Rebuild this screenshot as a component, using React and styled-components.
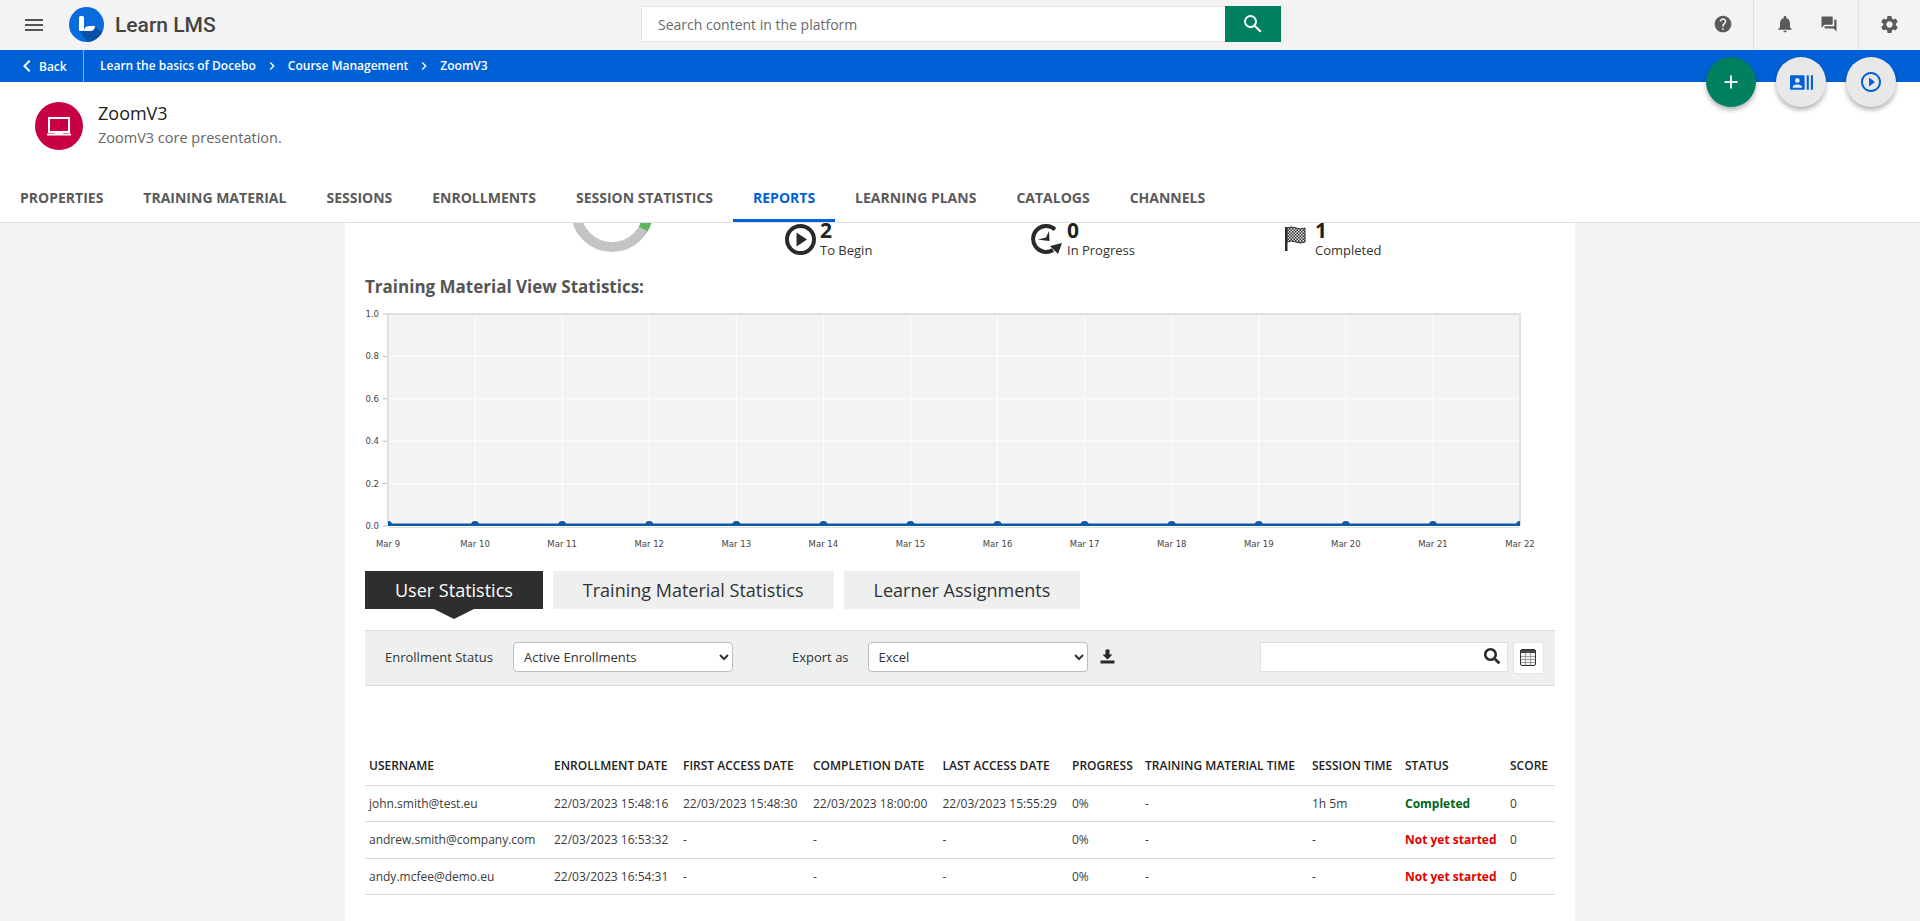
import React from 'react';
import styled, { createGlobalStyle } from 'styled-components';
import {
  MdMenu,
  MdSearch,
  MdHelp,
  MdNotifications,
  MdForum,
  MdSettings,
  MdChevronLeft,
  MdChevronRight,
  MdAdd,
  MdRecentActors,
  MdPlayCircleOutline,
} from 'react-icons/md';
import { FaSearch } from 'react-icons/fa';

const GlobalStyle = createGlobalStyle`
  html, body {
    margin: 0;
    padding: 0;
    background: #f3f3f3;
    font-family: "Open Sans", "Liberation Sans", sans-serif;
    color: #333;
  }
  * { box-sizing: border-box; }
`;

const Page = styled.div`
  position: relative;
  width: 1920px;
  height: 921px;
  overflow: hidden;
  display: flex;
  flex-direction: column;
`;

const TopBar = styled.header`
  height: 50px;
  flex: none;
  display: flex;
  background: #f3f3f3;
`;

const Brand = styled.div`
  width: 641px;
  display: flex;
  align-items: center;
  padding-left: 22px;
  color: #555;
`;

const LogoMark = styled.svg`
  width: 35px;
  height: 35px;
  margin-left: 23px;
  margin-top: -1px;
`;

const BrandName = styled.span`
  margin-left: 11px;
  font-family: Roboto, sans-serif;
  font-weight: 500;
  font-size: 21px;
  color: #444;
`;

const SearchBox = styled.div`
  width: 640px;
  height: 36px;
  margin-top: 6px;
  display: flex;
`;

const SearchInput = styled.input`
  flex: 1;
  min-width: 0;
  border: 1px solid #e4e4e4;
  border-right: none;
  background: #fff;
  padding: 0 16px;
  font-family: inherit;
  font-size: 14px;
  outline: none;

  &::placeholder {
    color: #6a6a6a;
    opacity: 1;
  }
`;

const SearchButton = styled.button`
  width: 56px;
  border: none;
  background: #00805f;
  color: #fff;
  display: flex;
  align-items: center;
  justify-content: center;
  padding: 0;
`;

const HeaderRight = styled.div`
  margin-left: auto;
  display: flex;
  color: #5a5a5a;
`;

const HeaderCell = styled.div`
  width: ${(p) => p.$w}px;
  height: 50px;
  display: flex;
  align-items: center;
  justify-content: center;
  padding-bottom: 2px;
  gap: ${(p) => p.$gap || 0}px;
  border-left: ${(p) => (p.$divided ? '1px solid #e2e2e2' : 'none')};
`;

const Breadcrumbs = styled.nav`
  height: 32px;
  flex: none;
  display: flex;
  align-items: center;
  background: #0060d6;
  color: #fff;
  font-size: 12px;
  font-weight: 600;
`;

const BackLink = styled.a`
  width: 84px;
  height: 32px;
  display: flex;
  align-items: center;
  padding-left: 15px;
  border-right: 1px solid #7fb0ea;
  margin-right: 16px;
`;

const Crumb = styled.span`
  padding-bottom: 2px;
`;

const CrumbSeparator = styled.span`
  display: flex;
  margin: 0 8px;
`;

const CourseHeader = styled.section`
  height: 141px;
  flex: none;
  display: flex;
  flex-direction: column;
  justify-content: space-between;
  background: #fff;
  border-bottom: 1px solid #e0e0e0;
`;

const CourseInfo = styled.div`
  display: flex;
  gap: 15px;
  padding: 20px 0 0 35px;
`;

const CourseBadge = styled.div`
  width: 48px;
  height: 48px;
  border-radius: 50%;
  background: #c60043;
  display: flex;
  align-items: center;
  justify-content: center;
`;

const CourseText = styled.div`
  display: flex;
  flex-direction: column;
  margin-top: -1px;
`;

const CourseTitle = styled.h1`
  margin: 0;
  font-size: 18px;
  line-height: 24px;
  font-weight: 400;
  color: #222;
`;

const CourseSubtitle = styled.p`
  margin: 1px 0 0;
  font-size: 14.5px;
  line-height: 24px;
  color: #666;
`;

const TabRow = styled.div`
  display: flex;
`;

const Tab = styled.a`
  height: 40px;
  padding: 0 20px 7px;
  display: flex;
  align-items: center;
  font-size: 14px;
  font-weight: 700;
  text-transform: uppercase;
  color: ${(p) => (p.$active ? '#0060d6' : '#5a5a5a')};
  border-bottom: 3px solid ${(p) => (p.$active ? '#0060d6' : 'transparent')};
`;

const Fabs = styled.div`
  position: absolute;
  top: 57px;
  right: 24px;
  display: flex;
  gap: 20px;
`;

const Fab = styled.button`
  width: 50px;
  height: 50px;
  border: none;
  padding: 0;
  border-radius: 50%;
  background: ${(p) => (p.$primary ? '#00805f' : '#e8e8e8')};
  color: ${(p) => (p.$primary ? '#fff' : '#0060d6')};
  display: flex;
  align-items: center;
  justify-content: center;
  box-shadow: 0 3px 5px rgba(0, 0, 0, 0.3);
`;

const Main = styled.main`
  flex: 1;
  min-height: 0;
  display: flex;
  justify-content: center;
  overflow: hidden;
`;

const Card = styled.div`
  width: 1230px;
  background: #fff;
  padding: 0 20px;
`;

const StatsRow = styled.div`
  display: grid;
  grid-template-columns: 420px 246px 252px 1fr;
  height: 33px;
`;

const Donut = styled.svg`
  width: 84px;
  height: 30px;
  margin-left: 205px;
`;

const Stat = styled.div`
  display: flex;
  gap: 4px;
`;

const StatIcon = styled.svg`
  flex: none;
  margin-top: ${(p) => p.$top}px;
`;

const StatText = styled.div`
  display: flex;
  flex-direction: column;
`;

const StatValue = styled.span`
  font-size: 21px;
  line-height: 15px;
  font-weight: 700;
  color: #222;
`;

const StatLabel = styled.span`
  font-size: 13px;
  line-height: 18px;
  margin-top: 3px;
  color: #333;
`;

const ChartTitle = styled.h2`
  margin: 19px 0 0;
  font-size: 17px;
  line-height: 24px;
  font-weight: 700;
  color: #555;
`;

const ChartSvg = styled.svg`
  display: block;
  width: 1190px;
  height: 250px;
  margin-top: 6px;
  font-family: "DejaVu Sans", sans-serif;
  font-size: 8.5px;
  fill: #444;
`;

const StatTabs = styled.div`
  display: flex;
  gap: 10px;
  margin-top: 16px;
`;

const StatTab = styled.a`
  position: relative;
  height: 38px;
  padding: 0 30px;
  display: flex;
  align-items: center;
  font-size: 18px;
  background: ${(p) => (p.$active ? '#2e2e2e' : '#eef0f0')};
  color: ${(p) => (p.$active ? '#fff' : '#333')};

  &::after {
    content: ${(p) => (p.$active ? "''" : 'none')};
    position: absolute;
    top: 38px;
    left: 50%;
    margin-left: -20px;
    border-style: solid;
    border-width: 10px 20px 0;
    border-color: #2e2e2e transparent transparent;
  }
`;

const Toolbar = styled.div`
  height: 56px;
  margin-top: 21px;
  display: flex;
  align-items: center;
  padding: 0 0 3px 20px;
  background: #eef0f0;
  border-top: 1px solid #dcdcdc;
  border-bottom: 1px solid #dcdcdc;
  font-size: 13px;
`;

const ToolbarLabel = styled.label`
  color: #333;
  margin-left: ${(p) => p.$gap || 0}px;
`;

const Select = styled.select`
  width: 220px;
  height: 30px;
  margin-left: ${(p) => p.$gap}px;
  padding: 0 6px;
  border: 1px solid #bdbdbd;
  border-radius: 4px;
  background-color: #fff;
  font-family: inherit;
  font-size: 13px;
  color: #333;
`;

const IconButton = styled.button`
  margin-left: 12px;
  padding: 0;
  border: none;
  background: none;
  display: flex;
  color: #2a2a2a;
`;

const FilterWrap = styled.div`
  position: relative;
  width: 248px;
  height: 30px;
  margin-left: 145px;
`;

const FilterInput = styled.input`
  width: 100%;
  height: 100%;
  border: 1px solid #e0e0e0;
  background: #fff;
  outline: none;
`;

const FilterIcon = styled.span`
  position: absolute;
  top: 6px;
  right: 8px;
  display: flex;
  color: #2a2a2a;
`;

const ColumnsButton = styled.button`
  width: 31px;
  height: 32px;
  margin-left: 5px;
  margin-top: 2px;
  padding: 0;
  border: 1px solid #e4e4e4;
  border-radius: 3px;
  background: #fff;
  display: flex;
  align-items: center;
  justify-content: center;
`;

const Table = styled.table`
  width: 1190px;
  margin-top: 60px;
  border-collapse: collapse;
  table-layout: fixed;
  font-size: 12px;
`;

const Th = styled.th`
  width: ${(p) => p.$w}px;
  height: 39px;
  padding: 0 0 0 4px;
  text-align: left;
  font-weight: 600;
  text-transform: uppercase;
  color: #222;
  white-space: nowrap;
  border-bottom: 1px solid #d9d9d9;
`;

const Td = styled.td`
  height: 36.5px;
  padding: 0 0 0 4px;
  color: #3a3a3a;
  white-space: nowrap;
  border-bottom: 1px solid #d9d9d9;
`;

const Status = styled.span`
  font-weight: 700;
  color: ${(p) => (p.$done ? '#006414' : '#e00000')};
`;

const columns = [
  ['Username', 185],
  ['Enrollment date', 129],
  ['First access date', 130],
  ['Completion date', 129.5],
  ['Last access date', 129.5],
  ['Progress', 73],
  ['Training material time', 167],
  ['Session time', 93],
  ['Status', 105],
  ['Score', 49],
];

const rows = [
  ['john.smith@test.eu', '22/03/2023 15:48:16', '22/03/2023 15:48:30', '22/03/2023 18:00:00', '22/03/2023 15:55:29', '0%', '-', '1h 5m', 'Completed', '0'],
  ['andrew.smith@company.com', '22/03/2023 16:53:32', '-', '-', '-', '0%', '-', '-', 'Not yet started', '0'],
  ['andy.mcfee@demo.eu', '22/03/2023 16:54:31', '-', '-', '-', '0%', '-', '-', 'Not yet started', '0'],
];

const tabs = ['Properties', 'Training Material', 'Sessions', 'Enrollments', 'Session Statistics', 'Reports', 'Learning Plans', 'Catalogs', 'Channels'];

const PLOT = { left: 23, top: 9, right: 1155, bottom: 221 };
const days = Array.from({ length: 14 }, (_, i) => i + 9);

function Logo() {
  return (
    <LogoMark viewBox="0 0 35 35">
      <defs>
        <clipPath id="logo-clip">
          <circle cx="17.5" cy="17.5" r="17.5" />
        </clipPath>
      </defs>
      <circle cx="17.5" cy="17.5" r="17.5" fill="#0a6bdc" />
      <g clipPath="url(#logo-clip)">
        <path d="M15 22 L26 19 L40 33 L22 40 L11 24 Z" fill="#0850a8" />
      </g>
      <path d="M10 10.5 q0 -1.5 1.5 -1.5 h2 q1.5 0 1.5 1.5 V22.5 q0 1.5 -1.5 1.5 h-2 q-1.5 0 -1.5 -1.5 Z" fill="#fff" />
      <path d="M15 24 q0 -4.5 5 -5 h6 q0 5 -5 5 Z" fill="#fff" />
    </LogoMark>
  );
}

function ChartPanel() {
  const stepX = (PLOT.right - PLOT.left) / 13;
  const stepY = (PLOT.bottom - PLOT.top) / 5;
  const w = PLOT.right - PLOT.left;
  const h = PLOT.bottom - PLOT.top;
  return (
    <ChartSvg viewBox="0 0 1190 250">
      <defs>
        <clipPath id="plot-clip">
          <rect x={PLOT.left} y={PLOT.top} width={w} height={h} />
        </clipPath>
      </defs>
      <rect x={PLOT.left} y={PLOT.top} width={w} height={h} fill="#f3f3f3" />
      {days.map((d, i) => (
        <line key={d} x1={PLOT.left + i * stepX} x2={PLOT.left + i * stepX} y1={PLOT.top} y2={PLOT.bottom} stroke="#fff" />
      ))}
      {[1, 0.8, 0.6, 0.4, 0.2, 0].map((v, i) => (
        <g key={v}>
          <line x1={PLOT.left} x2={PLOT.right} y1={PLOT.top + i * stepY} y2={PLOT.top + i * stepY} stroke="#fff" />
          <line x1={PLOT.left - 5} x2={PLOT.left} y1={PLOT.top + i * stepY} y2={PLOT.top + i * stepY} stroke="#bbb" />
          <text x={PLOT.left - 9} y={PLOT.top + i * stepY + 3} textAnchor="end">{v.toFixed(1)}</text>
        </g>
      ))}
      <path d={`M${PLOT.left} ${PLOT.bottom} V${PLOT.top} H${PLOT.right} V${PLOT.bottom}`} fill="none" stroke="#e0e0e0" strokeWidth="2" />
      <line x1={PLOT.left} x2={PLOT.right} y1={PLOT.bottom + 1.5} y2={PLOT.bottom + 1.5} stroke="#e0e0e0" />
      <g clipPath="url(#plot-clip)">
        <line x1={PLOT.left} x2={PLOT.right} y1={PLOT.bottom - 1} y2={PLOT.bottom - 1} stroke="#0a5aa8" strokeWidth="3" />
        {days.map((d, i) => (
          <circle key={d} cx={PLOT.left + i * stepX} cy={PLOT.bottom - 1} r="4" fill="#0a5aa8" />
        ))}
      </g>
      {days.map((d, i) => (
        <text key={d} x={PLOT.left + i * stepX} y={PLOT.bottom + 21} textAnchor="middle">{`Mar ${d}`}</text>
      ))}
    </ChartSvg>
  );
}

function App() {
  return (
    <Page>
      <GlobalStyle />
      <TopBar>
        <Brand>
          <MdMenu size={24} />
          <Logo />
          <BrandName>Learn LMS</BrandName>
        </Brand>
        <SearchBox>
          <SearchInput placeholder="Search content in the platform" />
          <SearchButton><MdSearch size={24} /></SearchButton>
        </SearchBox>
        <HeaderRight>
          <HeaderCell $w={60}><MdHelp size={20} /></HeaderCell>
          <HeaderCell $w={105} $gap={25} $divided><MdNotifications size={20} /><MdForum size={18} /></HeaderCell>
          <HeaderCell $w={62} $divided><MdSettings size={21} /></HeaderCell>
        </HeaderRight>
      </TopBar>

      <Breadcrumbs>
        <BackLink><MdChevronLeft size={24} />Back</BackLink>
        <Crumb>Learn the basics of Docebo</Crumb>
        <CrumbSeparator><MdChevronRight size={16} /></CrumbSeparator>
        <Crumb>Course Management</Crumb>
        <CrumbSeparator><MdChevronRight size={16} /></CrumbSeparator>
        <Crumb>ZoomV3</Crumb>
      </Breadcrumbs>

      <CourseHeader>
        <CourseInfo>
          <CourseBadge>
            <svg width="24" height="19" viewBox="0 0 24 19">
              <rect x="2" y="1" width="20" height="14" fill="none" stroke="#fff" strokeWidth="2" />
              <rect x="0" y="16.5" width="24" height="2" fill="#fff" />
              <rect x="8" y="14.5" width="8" height="3" fill="#fff" />
            </svg>
          </CourseBadge>
          <CourseText>
            <CourseTitle>ZoomV3</CourseTitle>
            <CourseSubtitle>ZoomV3 core presentation.</CourseSubtitle>
          </CourseText>
        </CourseInfo>
        <TabRow>
          {tabs.map((t) => (
            <Tab key={t} $active={t === 'Reports'}>{t}</Tab>
          ))}
        </TabRow>
      </CourseHeader>

      <Fabs>
        <Fab $primary><MdAdd size={22} /></Fab>
        <Fab><MdRecentActors size={25} /></Fab>
        <Fab><MdPlayCircleOutline size={24} /></Fab>
      </Fabs>

      <Main>
        <Card>
          <StatsRow>
            <Donut viewBox="0 0 84 30">
              <circle cx="42" cy="-12" r="36" fill="none" stroke="#c4c4c4" strokeWidth="10" />
              <path d="M73.2 6 A36 36 0 0 0 78 -12" fill="none" stroke="#5cb85c" strokeWidth="10" />
            </Donut>
            <Stat>
              <StatIcon $top={1} width="31" height="31" viewBox="0 0 31 31">
                <circle cx="15.5" cy="15.5" r="13.5" fill="none" stroke="#2a2a2a" strokeWidth="4" />
                <path d="M11.5 8.5 L22 15.5 L11.5 22.5 Z" fill="#2a2a2a" />
              </StatIcon>
              <StatText>
                <StatValue>2</StatValue>
                <StatLabel>To Begin</StatLabel>
              </StatText>
            </Stat>
            <Stat>
              <StatIcon $top={1} width="32" height="31" viewBox="0 0 32 31">
                <path d="M24 5.5 A13 13 0 1 0 22 26" fill="none" stroke="#2a2a2a" strokeWidth="4" />
                <path d="M19 22 L31 19 L27 30 Z" fill="#2a2a2a" />
                <path d="M7 15.5 L15 13.5 L18 7 L18.5 17 L14 16.5 Z" fill="#2a2a2a" />
              </StatIcon>
              <StatText>
                <StatValue>0</StatValue>
                <StatLabel>In Progress</StatLabel>
              </StatText>
            </Stat>
            <Stat>
              <StatIcon $top={2} width="28" height="28" viewBox="0 0 28 28">
                <defs>
                  <pattern id="checks" width="3" height="3" patternUnits="userSpaceOnUse">
                    <rect width="3" height="3" fill="#e8e8e8" />
                    <rect width="1.5" height="1.5" fill="#2a2a2a" />
                    <rect x="1.5" y="1.5" width="1.5" height="1.5" fill="#2a2a2a" />
                  </pattern>
                </defs>
                <rect x="2" y="2" width="2.5" height="24" fill="#2a2a2a" />
                <path d="M4 3 q5 -2 9 0 t9 0 V17 q-4 2 -9 0 t-9 0 Z" fill="url(#checks)" stroke="#2a2a2a" />
              </StatIcon>
              <StatText>
                <StatValue>1</StatValue>
                <StatLabel>Completed</StatLabel>
              </StatText>
            </Stat>
          </StatsRow>

          <ChartTitle>Training Material View Statistics:</ChartTitle>
          <ChartPanel />

          <StatTabs>
            <StatTab $active>User Statistics</StatTab>
            <StatTab>Training Material Statistics</StatTab>
            <StatTab>Learner Assignments</StatTab>
          </StatTabs>

          <Toolbar>
            <ToolbarLabel>Enrollment Status</ToolbarLabel>
            <Select $gap={20} defaultValue="active">
              <option value="active">Active Enrollments</option>
            </Select>
            <ToolbarLabel $gap={59}>Export as</ToolbarLabel>
            <Select $gap={19} defaultValue="excel">
              <option value="excel">Excel</option>
            </Select>
            <IconButton>
              <svg width="15" height="15" viewBox="0 0 15 15" fill="currentColor">
                <path d="M5.5 0.5 h4 V5.5 h3 L7.5 10.5 L2.5 5.5 h3 Z" />
                <rect x="0.5" y="11.5" width="14" height="3" />
              </svg>
            </IconButton>
            <FilterWrap>
              <FilterInput />
              <FilterIcon><FaSearch size={16} /></FilterIcon>
            </FilterWrap>
            <ColumnsButton>
              <svg width="16" height="17" viewBox="0 0 16 17">
                <rect x="0.5" y="0.5" width="15" height="16" rx="1.5" fill="#f4f4f4" stroke="#333" />
                <rect x="1" y="1" width="14" height="3" fill="#444" />
                <path d="M1 7.5 H15 M1 10.5 H15 M1 13.5 H15 M5.5 4 V16 M10.5 4 V16" stroke="#888" strokeWidth="0.8" />
              </svg>
            </ColumnsButton>
          </Toolbar>

          <Table>
            <thead>
              <tr>
                {columns.map(([label, w]) => (
                  <Th key={label} $w={w}>{label}</Th>
                ))}
              </tr>
            </thead>
            <tbody>
              {rows.map((row) => (
                <tr key={row[0]}>
                  {row.map((cell, i) => (
                    <Td key={i}>
                      {i === 8 ? <Status $done={cell === 'Completed'}>{cell}</Status> : cell}
                    </Td>
                  ))}
                </tr>
              ))}
            </tbody>
          </Table>
        </Card>
      </Main>
    </Page>
  );
}

export default App;
